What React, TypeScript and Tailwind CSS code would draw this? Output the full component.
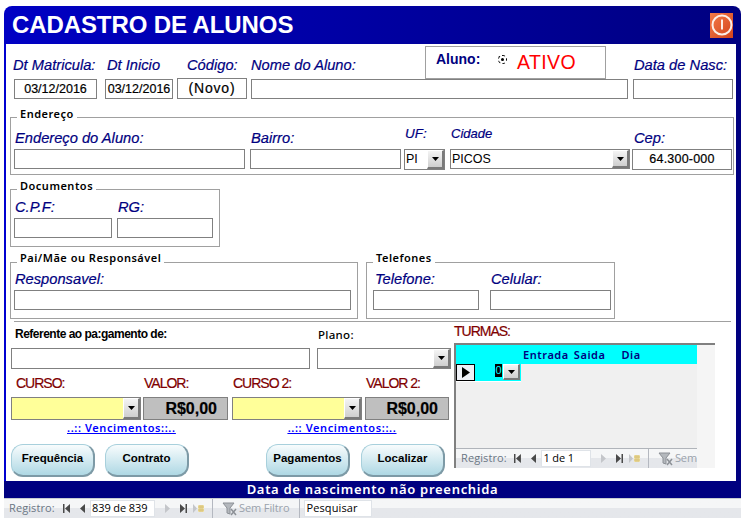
import type { ReactNode } from "react";

const labelCls = "font-['Liberation_Sans',sans-serif] italic text-[14.7px] leading-[16px] text-[#000080] [-webkit-text-stroke:0.2px]";
const redCls = "font-['Liberation_Sans',sans-serif] text-[14px] leading-[16px] text-[#800000] tracking-[-1px] [-webkit-text-stroke:0.2px]";
const legendCls = "absolute left-[6px] bg-white px-[3px] font-['Noto_Sans',sans-serif] font-semibold text-[11px] leading-[12px] tracking-[0.5px] text-black";

function Box({ className = "", fill = "bg-white", children }: { className?: string; fill?: string; children?: ReactNode }) {
  return (
    <div className={`flex shrink-0 items-center justify-center border border-[#808080] text-[12.500px] text-black [-webkit-text-stroke:0.2px] ${fill} ${className}`}>
      {children}
    </div>
  );
}

function ComboButton({ className = "" }: { className?: string }) {
  return (
    <div className={`flex items-center justify-center border-t border-r-2 border-b-2 border-l border-[#7a7a7a] border-t-white border-l-white bg-gradient-to-b from-[#f4f4f4] to-[#cfcfcf] ${className}`}>
      <svg width="7" height="4" viewBox="0 0 7 4"><path d="M0 0h7L3.500 4z" fill="#000" /></svg>
    </div>
  );
}

function Combo({ className = "", text }: { className?: string; text?: string }) {
  return (
    <div className={`flex shrink-0 items-center justify-between border border-[#808080] pl-[1px] text-[12.500px] text-black ${className}`}>
      <span>{text}</span>
      <ComboButton className="h-full w-[17px]" />
    </div>
  );
}

function First() {
  return (
    <svg width="8" height="9" viewBox="0 0 8 9"><path d="M1 0h1.500v9H1zM8 0v9L3 4.500z" fill="#4a4a4a" /></svg>
  );
}
function Prev({ fill = "#4a4a4a" }: { fill?: string }) {
  return <svg width="5" height="9" viewBox="0 0 5 9"><path d="M5 0v9L0 4.500z" fill={fill} /></svg>;
}
function Next({ fill = "#c4c6ca" }: { fill?: string }) {
  return <svg width="5" height="9" viewBox="0 0 5 9"><path d="M0 0v9l5-4.500z" fill={fill} /></svg>;
}
function Last() {
  return (
    <svg width="8" height="9" viewBox="0 0 8 9"><path d="M0 0v9l5-4.500zM5.500 0H7v9H5.500z" fill="#4a4a4a" /></svg>
  );
}
function NewRec() {
  return (
    <svg width="11" height="9" viewBox="0 0 11 9">
      <path d="M0 0v9l4-4.500z" fill="#c4c6ca" />
      <rect x="5" y="1" width="6" height="7" fill="#efe3b0" />
      <path d="M5 3h6M5 6h6M7 1v7M9 1v7" stroke="#d8c070" strokeWidth="1" />
    </svg>
  );
}
function FunnelOff() {
  return (
    <svg width="16" height="14" viewBox="0 0 16 14">
      <path d="M1 1h11L8 6v6L5 11V6z" fill="#b4b8bd" stroke="#8c9096" strokeWidth="1" />
      <path d="M9 7l5 6M14 7l-5 6" stroke="#8c9096" strokeWidth="1.500" />
    </svg>
  );
}

function RecordNav({ current, short, search }: { current: string; short?: boolean; search?: boolean }) {
  return (
    <div className="flex h-full w-full items-center overflow-hidden bg-gradient-to-b from-[#f5f6f7] from-45% to-[#e5e7eb] to-45% font-['Open_Sans',sans-serif] text-[11px] tracking-[0.1px] whitespace-nowrap text-[#6a7684]">
      <span className="ml-[5px] w-[53px]">Registro:</span>
      <First />
      <span className="mr-[5px] ml-[10px] flex"><Prev /></span>
      <div className={`flex h-[17px] items-center border border-[#dfe3e8] bg-white pl-[1px] text-[11px] tracking-[-0.1px] text-black ${short ? "w-[50px]" : "w-[65px]"}`}>{current}</div>
      <span className="ml-[10px] flex"><Next /></span>
      <span className="ml-[10px] flex"><Last /></span>
      <span className="ml-[5px] flex"><NewRec /></span>
      <div className="ml-[8px] h-full w-[1px] bg-[#b4b8c0]" />
      <span className="ml-[9px] flex"><FunnelOff /></span>
      <span className="ml-[1px] tracking-[-0.1px] text-[#9aa2ac]">{short ? "Sem" : "Sem Filtro"}</span>
      {search && (
        <>
          <div className="ml-[9px] h-full w-[1px] bg-[#b4b8c0]" />
          <div className="ml-[4px] flex h-[17px] w-[68px] items-center border border-[#dfe3e8] bg-white pl-[2px] text-[11px] text-black">Pesquisar</div>
        </>
      )}
    </div>
  );
}

function PillButton({ children, className = "" }: { children: ReactNode; className?: string }) {
  return (
    <button className={`h-[33px] w-[84px] rounded-[12px] border border-r-2 border-b-2 border-[#a8d0dc] border-r-[#7d9aa6] border-b-[#7d9aa6] bg-gradient-to-b from-[#f8fcfd] to-[#aed8e4] pb-[3px] font-['Liberation_Sans',sans-serif] text-[11.500px] font-bold text-black ${className}`}>
      {children}
    </button>
  );
}

export default function App() {
  return (
    <div className="h-[525px] w-[746px] overflow-hidden bg-white pt-[6px] pl-[4px] font-['Liberation_Sans',sans-serif]">
      <div className="w-[737px]">
        {/* title bar */}
        <div className="flex h-[38px] items-center justify-between rounded-t-[8px] bg-gradient-to-r from-[#0000c4] to-[#000080] pr-[8px] pl-[8px]">
          <h1 className="text-[24px] leading-[28px] font-bold tracking-[-0.1px] text-white">CADASTRO DE ALUNOS</h1>
          <div className="flex h-[25px] w-[23px] items-center justify-center bg-gradient-to-br from-[#f47a48] to-[#d2431a]">
            <svg width="22" height="22" viewBox="0 0 22 22" fill="none" stroke="#fdeee6" strokeWidth="2">
              <circle cx="11" cy="11" r="9.500" />
              <path d="M11 5.500v10" />
            </svg>
          </div>
        </div>

        {/* form body */}
        <div className="relative h-[437px] border-r-[5px] border-l-2 border-r-[#000080] border-l-[#0000d0] bg-white">
          {/* aluno status */}
          <div className="absolute top-[2px] left-[419px] h-[33px] w-[181px] border border-[#a0a0a0] bg-white">
            <span className="absolute top-[4px] left-[10px] text-[14px] leading-[16px] font-bold text-[#000080]">Aluno:</span>
            <span className="absolute top-[8px] left-[72px] h-[9px] w-[9px] rounded-full border border-dashed border-black bg-white">
              <span className="absolute top-[2px] left-[2px] h-[3px] w-[3px] rounded-full bg-black" />
            </span>
            <span className="absolute top-[4px] left-[91px] text-[19.500px] leading-[22px] tracking-[0.4px] text-[#ff0000]">ATIVO</span>
          </div>

          {/* matricula */}
          <div className={`flex pt-[13px] ${labelCls}`}>
            <span className="ml-[7px] w-[94px]">Dt Matricula:</span>
            <span className="w-[80px]">Dt Inicio</span>
            <span className="w-[64px]">Código:</span>
            <span className="w-[383px]">Nome do Aluno:</span>
            <span>Data de Nasc:</span>
          </div>
          <div className="mt-[5px] flex items-end pl-[8px]">
            <Box className="h-[20px] w-[83px]">03/12/2016</Box>
            <Box className="ml-[8px] h-[20px] w-[68px]">03/12/2016</Box>
            <Box className="ml-[4px] h-[21px] w-[70px] text-[14px] tracking-[0.8px]">(Novo)</Box>
            <Box className="ml-[4px] h-[20px] w-[377px]" />
            <Box className="ml-[5px] h-[20px] w-[100px]" />
          </div>

          {/* endereco */}
          <div className="relative mt-[18px] ml-[4px] h-[58px] w-[724px] border border-[#a0a0a0]">
            <span className={`${legendCls} top-[-10px]`}>Endereço</span>
            <div className={`flex pt-[12px] ${labelCls}`}>
              <span className="ml-[4px] w-[236px]">Endereço do Aluno:</span>
              <span className="w-[154px]">Bairro:</span>
              <span className="mt-[-4px] w-[46px] text-[13.500px]">UF:</span>
              <span className="mt-[-4px] w-[183px] text-[13px]">Cidade</span>
              <span>Cep:</span>
            </div>
            <div className="mt-[3px] flex items-start pl-[3px]">
              <Box className="h-[20px] w-[231px]" />
              <Box className="ml-[5px] h-[20px] w-[151px]" />
              <Combo className="ml-[3px] h-[21px] w-[41px]" text="PI" />
              <Combo className="ml-[5px] h-[20px] w-[180px]" text="PICOS" />
              <Box className="ml-[2px] h-[21px] w-[100px] tracking-[0.2px]">64.300-000</Box>
            </div>
          </div>

          {/* documentos */}
          <div className="relative mt-[14px] ml-[4px] h-[58px] w-[210px] border border-[#a0a0a0]">
            <span className={`${legendCls} top-[-10px]`}>Documentos</span>
            <div className={`flex pt-[9px] ${labelCls}`}>
              <span className="ml-[4px] w-[103px]">C.P.F:</span>
              <span>RG:</span>
            </div>
            <div className="mt-[3px] flex pl-[3px]">
              <Box className="h-[20px] w-[98px]" />
              <Box className="ml-[5px] h-[20px] w-[96px]" />
            </div>
          </div>

          {/* responsavel e telefones */}
          <div className="mt-[15px] ml-[4px] flex gap-[8px]">
            <div className="relative h-[57px] w-[348px] border border-[#a0a0a0]">
              <span className={`${legendCls} top-[-11px]`}>Pai/Mãe ou Responsável</span>
              <div className={`pt-[8px] pl-[4px] ${labelCls}`}>Responsavel:</div>
              <Box className="mt-[3px] ml-[3px] h-[20px] w-[337px]" />
            </div>
            <div className="relative h-[57px] w-[249px] border border-[#a0a0a0]">
              <span className={`${legendCls} top-[-11px]`}>Telefones</span>
              <div className={`flex pt-[8px] ${labelCls}`}>
                <span className="ml-[8px] w-[116px]">Telefone:</span>
                <span>Celular:</span>
              </div>
              <div className="mt-[3px] flex pl-[6px]">
                <Box className="h-[20px] w-[106px]" />
                <Box className="ml-[11px] h-[20px] w-[121px]" />
              </div>
            </div>
          </div>

          <div className="mt-[2px] ml-[8px] h-[1px] w-[717px] bg-[#a0a0a0]" />

          {/* pagamento e turmas */}
          <div className="flex">
            <div className="ml-[5px] w-[444px]">
              <div className="flex pt-[5px] text-[12px] leading-[14px] font-bold">
                <span className="ml-[4px] w-[303px] tracking-[-0.5px] text-black">Referente ao pa:gamento de:</span>
                <span className="pt-[1px] font-['Noto_Sans',sans-serif] text-[11.500px] font-medium tracking-[0.3px] text-black">Plano:</span>
              </div>
              <div className="mt-[6px] flex">
                <Box className="h-[21px] w-[299px]" />
                <Combo className="ml-[7px] h-[21px] w-[134px]" />
              </div>
              <div className={`mt-[6px] flex ${redCls}`}>
                <span className="ml-[5px] w-[128px]">CURSO:</span>
                <span className="w-[89px]">VALOR:</span>
                <span className="w-[133px]">CURSO 2:</span>
                <span>VALOR 2:</span>
              </div>
              <div className="mt-[6px] flex">
                <Combo className="h-[23px] w-[130px] bg-[#ffff99]" />
                <Box className="ml-[2px] h-[23px] w-[85px] justify-end pr-[10px] text-[16px] font-bold" fill="bg-[#bfbfbf]">R$0,00</Box>
                <Combo className="ml-[4px] h-[23px] w-[130px] bg-[#ffff99]" />
                <Box className="ml-[3px] h-[23px] w-[84px] justify-end pr-[10px] text-[16px] font-bold" fill="bg-[#bfbfbf]">R$0,00</Box>
              </div>
              <div className="mt-[1px] flex font-['Noto_Sans',sans-serif] text-[11px] leading-[14px] font-semibold tracking-[0.6px] text-[#0000ff] underline">
                <a className="ml-[56px]">..:: Vencimentos::..</a>
                <a className="ml-[112px]">..:: Vencimentos::..</a>
              </div>
              <div className="mt-[9px] flex">
                <PillButton>Frequência</PillButton>
                <PillButton className="ml-[10px]">Contrato</PillButton>
                <PillButton className="ml-[77px]">Pagamentos</PillButton>
                <PillButton className="ml-[11px]">Localizar</PillButton>
              </div>
            </div>

            <div className="ml-[-1px] flex-1">
              <div className={`pt-[1px] ${redCls}`}>TURMAS:</div>
              {/* subformulario */}
              <div className="mt-[4px] h-[125px] w-[261px] border-t-2 border-l-2 border-[#808080] bg-[#f5f5f5]">
                <div className="flex h-full w-[241px] flex-col bg-[#f0f0f0]">
                  <div className="flex h-[19px] shrink-0 bg-[#00ffff] font-['Noto_Sans',sans-serif] text-[11px] leading-[19px] font-semibold tracking-[0.55px] text-[#000080]">
                    <span className="ml-[67px]">Entrada</span>
                    <span className="ml-[5px]">Saida</span>
                    <span className="ml-[16px]">Dia</span>
                  </div>
                  <div className="flex h-[18px] w-[65px] shrink-0 bg-white">
                    <div className="flex h-[17px] w-[19px] items-center justify-center border border-black bg-[#eef0f6]">
                      <svg width="8" height="11" viewBox="0 0 8 11"><path d="M0 0v11l8-5.500z" fill="#000" /></svg>
                    </div>
                    <div className="flex h-[17px] flex-1 justify-end bg-[#00ffff] pr-[1px]">
                      <span className="h-[13px] w-[7px] bg-black text-center text-[11px] leading-[13px] text-[#00ffff]">0</span>
                      <ComboButton className="ml-[1px] h-[16px] w-[17px]" />
                    </div>
                  </div>
                  <div className="flex-1" />
                  <div className="h-[20px] shrink-0 border-t border-[#b0b4ba]">
                    <RecordNav current="1 de 1" short />
                  </div>
                </div>
              </div>
            </div>
          </div>
        </div>

        {/* status */}
        <div className="h-[17px] bg-[#000080] text-center font-['Noto_Sans',sans-serif] text-[13px] leading-[17px] font-semibold tracking-[0.7px] text-white">
          Data de nascimento não preenchida
        </div>

        {/* navegacao */}
        <div className="h-[20px] border-t border-[#c8ccd2]">
          <RecordNav current="839 de 839" search />
        </div>
      </div>
    </div>
  );
}
